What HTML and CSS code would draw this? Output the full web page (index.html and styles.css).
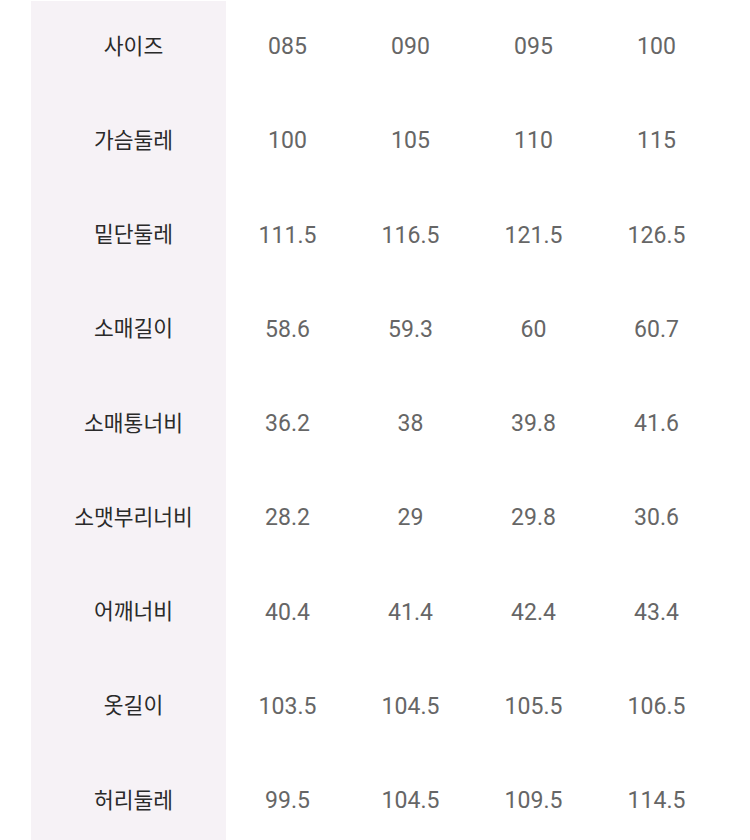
FILE: index.html
```html
<!DOCTYPE html>
<html lang="ko">
<head>
<meta charset="utf-8">
<title>사이즈</title>
<link rel="stylesheet" href="styles.css">
</head>
<body>
<div class="size-table">
  <div class="label">사이즈</div><div class="val">085</div><div class="val">090</div><div class="val">095</div><div class="val">100</div>
  <div class="label">가슴둘레</div><div class="val">100</div><div class="val">105</div><div class="val">110</div><div class="val">115</div>
  <div class="label">밑단둘레</div><div class="val">111.5</div><div class="val">116.5</div><div class="val">121.5</div><div class="val">126.5</div>
  <div class="label">소매길이</div><div class="val">58.6</div><div class="val">59.3</div><div class="val">60</div><div class="val">60.7</div>
  <div class="label">소매통너비</div><div class="val">36.2</div><div class="val">38</div><div class="val">39.8</div><div class="val">41.6</div>
  <div class="label">소맷부리너비</div><div class="val">28.2</div><div class="val">29</div><div class="val">29.8</div><div class="val">30.6</div>
  <div class="label">어깨너비</div><div class="val">40.4</div><div class="val">41.4</div><div class="val">42.4</div><div class="val">43.4</div>
  <div class="label">옷길이</div><div class="val">103.5</div><div class="val">104.5</div><div class="val">105.5</div><div class="val">106.5</div>
  <div class="label">허리둘레</div><div class="val">99.5</div><div class="val">104.5</div><div class="val">109.5</div><div class="val">114.5</div>
</div>
</body>
</html>
```
FILE: styles.css
```css
html, body {
  margin: 0;
  padding: 0;
  background: #ffffff;
}
body {
  overflow: hidden;
}
.size-table {
  display: grid;
  grid-template-columns: 195px repeat(4, 123px);
  grid-auto-rows: 94.25px;
  padding: 1px 0 0 31px;
}
.label, .val {
  display: flex;
  align-items: center;
  justify-content: center;
}
.label {
  background: #f6f2f6;
  color: #2a2a2a;
  font-family: "Noto Sans CJK KR", "Noto Sans", sans-serif;
  font-size: 21.5px;
  font-weight: 400;
  padding: 0 0 8px 10px;
  box-sizing: border-box;
}
.val {
  color: #666666;
  font-family: Roboto, "Liberation Sans", sans-serif;
  font-size: 23px;
  padding-bottom: 3px;
  box-sizing: border-box;
}
```
